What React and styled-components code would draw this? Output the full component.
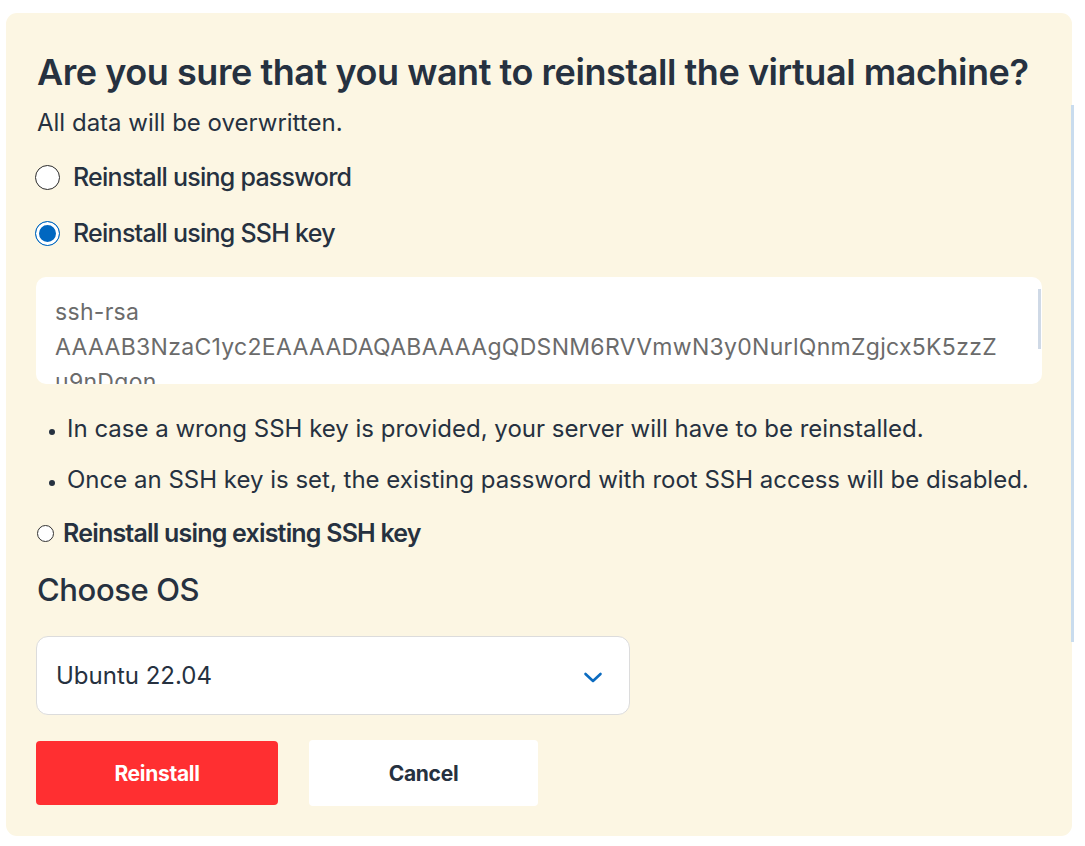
import React, { useState } from "react";
import styled, { createGlobalStyle } from "styled-components";

const GlobalStyle = createGlobalStyle`
  body {
    margin: 0;
    background: #ffffff;
    font-family: Inter, "Noto Sans", sans-serif;
    color: #263140;
  }
`;

const App = () => {
  const [mode, setMode] = useState("key");
  return (
    <>
      <GlobalStyle />
      <Page>
        <Card>
          <Title>Are you sure that you want to reinstall the virtual machine?</Title>
          <Lead>All data will be overwritten.</Lead>
          <Option $gap={24}>
            <Radio
              type="radio"
              name="mode"
              checked={mode === "password"}
              onChange={() => setMode("password")}
            />
            <OptionLabel>Reinstall using password</OptionLabel>
          </Option>
          <Option $gap={26}>
            <Radio
              type="radio"
              name="mode"
              checked={mode === "key"}
              onChange={() => setMode("key")}
            />
            <OptionLabel>Reinstall using SSH key</OptionLabel>
          </Option>
          <KeyBox>
            <KeyText>
              ssh-rsa
              <br />
              AAAAB3NzaC1yc2EAAAADAQABAAAAgQDSNM6RVVmwN3y0NurlQnmZgjcx5K5zzZ
              <br />
              u9nDgon
            </KeyText>
            <KeyScroll />
          </KeyBox>
          <Notes>
            <li>In case a wrong SSH key is provided, your server will have to be reinstalled.</li>
            <li>Once an SSH key is set, the existing password with root SSH access will be disabled.</li>
          </Notes>
          <SmallOption>
            <SmallRadio
              type="radio"
              name="mode"
              checked={mode === "existing"}
              onChange={() => setMode("existing")}
            />
            <SmallLabel>Reinstall using existing SSH key</SmallLabel>
          </SmallOption>
          <Subtitle>Choose OS</Subtitle>
          <Select>
            <span>Ubuntu 22.04</span>
            <svg width="24" height="24" viewBox="0 0 24 24" fill="none" stroke="#0b6bc0" strokeWidth="2.6" strokeLinecap="round" strokeLinejoin="round">
              <path d="M4.5 9l7.5 7 7.5-7" />
            </svg>
          </Select>
          <Actions>
            <Button $primary>Reinstall</Button>
            <Button>Cancel</Button>
          </Actions>
        </Card>
        <PageScroll />
      </Page>
    </>
  );
};

export default App;

const Page = styled.div`
  position: relative;
  width: 1085px;
  height: 846px;
  padding: 13px 0 0 6px;
  box-sizing: border-box;
`;
const Card = styled.div`
  width: 1066px;
  height: 823px;
  box-sizing: border-box;
  background: #fcf6e3;
  border-radius: 11px;
  padding: 39px 0 0 31px;
  display: flex;
  flex-direction: column;
`;
const Title = styled.h1`
  margin: 0;
  font-size: 36px;
  line-height: 40px;
  font-weight: 600;
  letter-spacing: -0.45px;
  color: #263140;
`;
const Lead = styled.p`
  margin: 16px 0 0;
  font-size: 24px;
  line-height: 30px;
  color: #263140;
`;
const Option = styled.label`
  display: flex;
  align-items: center;
  gap: 13px;
  margin-top: ${({ $gap }) => $gap}px;
  height: 30px;
`;
const Radio = styled.input`
  appearance: none;
  margin: 0 0 0 -2px;
  width: 25px;
  height: 25px;
  border-radius: 50%;
  border: 1.5px solid #2b2b2b;
  background: #fff;
  box-sizing: border-box;
  &:checked {
    border: 1.5px solid #0067c0;
    background: #0067c0;
    box-shadow: inset 0 0 0 3px #fff;
  }
`;
const OptionLabel = styled.span`
  font-size: 25px;
  font-weight: 500;
  letter-spacing: -0.75px;
  color: #263140;
`;
const KeyBox = styled.div`
  position: relative;
  margin-top: 29px;
  width: 1006px;
  height: 107px;
  margin-left: -1px;
  background: #fff;
  border-radius: 10px;
  overflow: hidden;
`;
const KeyText = styled.div`
  padding: 18px 0 0 19px;
  font-size: 23px;
  line-height: 35px;
  letter-spacing: 0.3px;
  color: #6b6b6b;
`;
const KeyScroll = styled.div`
  position: absolute;
  right: 1px;
  top: 12px;
  width: 3px;
  height: 60px;
  background: #cfd9e6;
`;
const Notes = styled.ul`
  margin: 30px 0 0;
  padding: 0 0 0 30px;
  font-size: 24px;
  line-height: 30px;
  color: #263140;
  li + li {
    margin-top: 21px;
  }
  li::marker {
    font-size: 18px;
  }
`;
const SmallOption = styled.label`
  display: flex;
  align-items: center;
  gap: 9px;
  margin-top: 23px;
  height: 30px;
`;
const SmallRadio = styled.input`
  appearance: none;
  margin: 0;
  width: 17px;
  height: 17px;
  border-radius: 50%;
  border: 1.2px solid #333;
  background: #fff;
  box-sizing: border-box;
  &:checked {
    border-color: #0067c0;
    background: #0067c0;
    box-shadow: inset 0 0 0 2px #fff;
  }
`;
const SmallLabel = styled.span`
  font-size: 25px;
  font-weight: 600;
  letter-spacing: -0.8px;
  color: #263140;
`;
const Subtitle = styled.h2`
  margin: 24px 0 0;
  font-size: 31px;
  line-height: 36px;
  font-weight: 500;
  letter-spacing: -0.4px;
  color: #263140;
`;
const Select = styled.div`
  margin-top: 28px;
  margin-left: -1px;
  width: 594px;
  height: 79px;
  box-sizing: border-box;
  background: #fff;
  border: 1px solid #dcdcdc;
  border-radius: 12px;
  display: flex;
  align-items: center;
  justify-content: space-between;
  padding: 0 24px 0 19px;
  font-size: 24px;
  color: #263140;
  svg {
    margin-top: 2px;
  }
`;
const Actions = styled.div`
  display: flex;
  gap: 31px;
  margin-top: 25px;
  margin-left: -1px;
  align-items: center;
`;
const Button = styled.button`
  width: ${({ $primary }) => ($primary ? "242px" : "229px")};
  height: ${({ $primary }) => ($primary ? "64px" : "66px")};
  border: none;
  border-radius: 4px;
  background: ${({ $primary }) => ($primary ? "#ff2f31" : "#ffffff")};
  color: ${({ $primary }) => ($primary ? "#ffffff" : "#263140")};
  font-family: Inter, sans-serif;
  font-size: 21px;
  font-weight: 700;
  letter-spacing: -0.3px;
  cursor: pointer;
`;
const PageScroll = styled.div`
  position: absolute;
  left: 1071px;
  top: 105px;
  width: 3px;
  height: 537px;
  background: #c9dcee;
`;
